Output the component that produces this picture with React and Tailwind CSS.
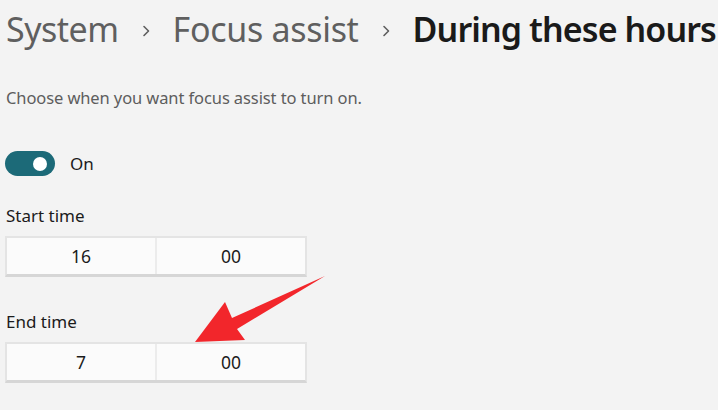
import React from "react";

function Chevron() {
  return (
    <svg width="10" height="14" viewBox="0 0 10 14" className="mx-[22px] mt-[4px]">
      <path d="M3 2.5 L7.5 7 L3 11.5" fill="none" stroke="#5f5f5f" strokeWidth="1.6" strokeLinecap="round" strokeLinejoin="round" />
    </svg>
  );
}

function TimeBox({ hour, minute }) {
  return (
    <div className="flex w-[302px] h-[41px] border-x-[2px] border-t-[2px] border-b-[3px] border-x-[#e4e4e4] border-t-[#e4e4e4] border-b-[#d6d6d6] bg-[#fbfbfb]">
      <div className="flex-1 flex items-center justify-center text-[17.5px] text-[#1b1b1b]">{hour}</div>
      <div className="w-[2px] bg-[#ececec]" />
      <div className="flex-1 flex items-center justify-center text-[17.5px] text-[#1b1b1b]">{minute}</div>
    </div>
  );
}

export default function App() {
  return (
    <div
      className="relative w-[718px] h-[410px] overflow-hidden bg-[#f3f3f3] pl-[5px]"
      style={{ fontFamily: '"Noto Sans", "Open Sans", sans-serif' }}
    >
      {/* Breadcrumb */}
      <div className="flex items-center h-[46px] mt-[6px] pl-[1px] text-[34px] leading-none whitespace-nowrap">
        <span className="text-[#5f5f5f] tracking-[-0.5px]">System</span>
        <Chevron />
        <span className="text-[#5f5f5f] tracking-[-0.3px]">Focus assist</span>
        <Chevron />
        <span className="text-[#1a1a1a] font-semibold tracking-[-0.9px]">During these hours</span>
      </div>

      <p className="mt-[35px] text-[16.5px] leading-[22px] text-[#5d5d5d] pl-[1px] tracking-[-0.1px]">
        Choose when you want focus assist to turn on.
      </p>

      {/* Toggle */}
      <div className="flex items-center mt-[42px] h-[25px]">
        <div className="w-[50px] h-[25px] rounded-full bg-[#1c6a78] flex items-center justify-end pr-[8px]">
          <div className="w-[14px] h-[14px] rounded-full bg-white" />
        </div>
        <span className="ml-[15px] text-[17px] text-[#1b1b1b]">On</span>
      </div>

      <div className="mt-[28px] text-[17px] leading-[24px] text-[#1b1b1b] pl-[1px]">Start time</div>
      <div className="mt-[8px]">
        <TimeBox hour="16" minute="00" />
      </div>

      <div className="mt-[33px] text-[17px] leading-[24px] text-[#1b1b1b] pl-[1px]">End time</div>
      <div className="mt-[8px]">
        <TimeBox hour="7" minute="00" />
      </div>

      {/* Annotation arrow */}
      <svg className="absolute left-0 top-0 pointer-events-none" width="718" height="410" viewBox="0 0 718 410">
        <polygon
          points="325,276 232,318 225,302 195,342 245,340 237,329"
          fill="#f2262b"
        />
      </svg>
    </div>
  );
}
